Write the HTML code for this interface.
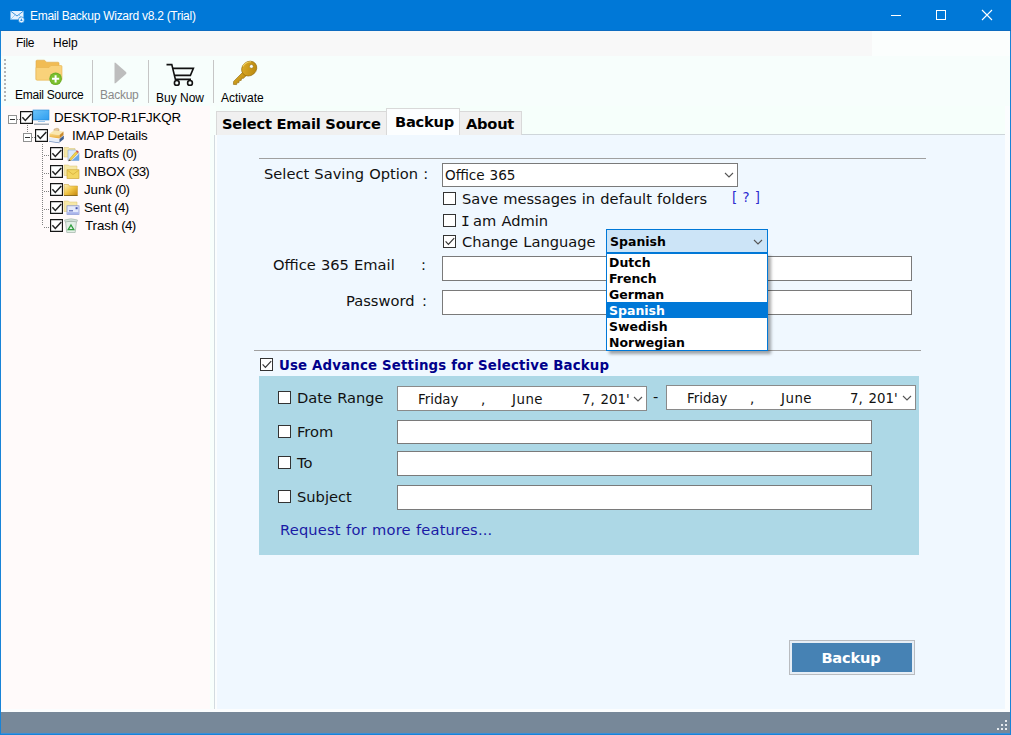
<!DOCTYPE html>
<html><head><meta charset="utf-8">
<style>
*{box-sizing:border-box;margin:0;padding:0}
html,body{width:1011px;height:735px;overflow:hidden;background:#f0f8ff}
body{position:relative;font-family:"DejaVu Sans","Liberation Sans",sans-serif;color:#000}
.abs,.abs-c>*{position:absolute}
#title{left:0;top:0;width:1011px;height:31px;background:#0078d7;border-bottom:1px solid #0d6cc0}
#title .t{left:30px;top:9px;font:12px "Liberation Sans",sans-serif;color:#fff;white-space:nowrap;letter-spacing:-0.27px}
#frame{left:0;top:31px;width:1011px;height:704px;border-left:1px solid #1883d7;border-right:1px solid #1883d7;border-bottom:1px solid #1883d7}
#menu{left:1px;top:31px;width:1009px;height:25px;background:linear-gradient(to right,#f8f8f8 871px,#fbfefd 871px)}
#menu span{position:absolute;top:5px;font:12px "Liberation Sans",sans-serif;letter-spacing:-0.3px}
#tool{left:1px;top:56px;width:1009px;height:50px;background:#f7fefc}
.tb{position:absolute;font:12px "Liberation Sans",sans-serif;white-space:nowrap;top:88px;letter-spacing:-0.25px}
.sep{position:absolute;top:60px;width:1px;height:43px;background:#c6c6c6}
#left{left:1px;top:106px;width:209px;height:606px;background:#fffafa}
#split{left:210px;top:106px;width:7px;height:606px;background:#f8fffc}
#split2{left:214px;top:135px;width:3px;height:577px;background:linear-gradient(to right,#d3dbe0 1px,#fbfdfe 1px)}
#status{left:1px;top:712px;width:1009px;height:22px;background:#778899}
.tree{position:absolute;font:13.33px "Liberation Sans",sans-serif;letter-spacing:-0.1px;white-space:nowrap;line-height:18px}
.cb{position:absolute;width:13px;height:13px;border:1px solid #333;background:#fff}
.cb svg{position:absolute;left:-1px;top:-1px}
#tree .cb{border-color:#151515;box-shadow:inset 0 0 0 .15px #1e1e1e}
.lbl{position:absolute;word-spacing:0.5px;font-size:14.67px;line-height:18px;white-space:nowrap;color:#111}
.inp{position:absolute;background:#fff;border:1px solid #7a7a7a}
.hr{position:absolute;height:1px;background:#a0a0a0}
.tab{position:absolute;font-weight:bold;font-size:14.67px;letter-spacing:-0.25px;white-space:nowrap;line-height:20px;color:#000}
.li{position:absolute;left:1px;width:160px;height:16px;font-weight:bold;font-size:12.5px;line-height:16px;padding-left:1px;white-space:nowrap}
.dt{position:absolute;font-size:13.33px;line-height:18px;white-space:nowrap;color:#111}
</style></head><body>
<div id="title" class="abs"><div class="t abs">Email Backup Wizard v8.2 (Trial)</div></div>
<div id="menu" class="abs"><span style="left:15px">File</span><span style="left:52px;letter-spacing:0">Help</span></div>
<div id="tool" class="abs"></div>
<div class="tb" style="left:15px;top:88px">Email Source</div>
<div class="tb" style="left:100px;top:88px;color:#8a8a8a">Backup</div>
<div class="tb" style="left:156px;top:91px;letter-spacing:0">Buy Now</div>
<div class="tb" style="left:221px;top:91px;letter-spacing:0">Activate</div>
<div class="sep" style="left:92px"></div><div class="sep" style="left:148px"></div><div class="sep" style="left:213px"></div>
<div id="left" class="abs"></div>
<div id="split" class="abs"></div><div id="split2" class="abs"></div>

<!-- TREE -->
<div id="tree">
<div class="tree" style="left:54px;top:109px">DESKTOP-R1FJKQR</div>
<div class="tree" style="left:72px;top:127px">IMAP Details</div>
<div class="tree" style="left:84px;top:145px;word-spacing:-.4px">Drafts <span style="letter-spacing:-.7px">(0)</span></div>
<div class="tree" style="left:84px;top:163px;word-spacing:-.4px">INBOX <span style="letter-spacing:-.7px">(33)</span></div>
<div class="tree" style="left:84px;top:181px;word-spacing:-.4px">Junk <span style="letter-spacing:-.7px">(0)</span></div>
<div class="tree" style="left:84px;top:199px;word-spacing:-.4px">Sent <span style="letter-spacing:-.7px">(4)</span></div>
<div class="tree" style="left:85px;top:217px;word-spacing:-.4px">Trash <span style="letter-spacing:-.7px">(4)</span></div>
<div class="cb on" style="left:20px;top:111px"><svg width="13" height="13" viewBox="0 0 13 13"><path d="M2.4 6.3 L5.3 9.4 L11.3 3" fill="none" stroke="#222" stroke-width="1.5"/></svg></div>
<div class="cb on" style="left:35px;top:129px"><svg width="13" height="13" viewBox="0 0 13 13"><path d="M2.4 6.3 L5.3 9.4 L11.3 3" fill="none" stroke="#222" stroke-width="1.5"/></svg></div>
<div class="cb on" style="left:50px;top:147px"><svg width="13" height="13" viewBox="0 0 13 13"><path d="M2.4 6.3 L5.3 9.4 L11.3 3" fill="none" stroke="#222" stroke-width="1.5"/></svg></div>
<div class="cb on" style="left:50px;top:165px"><svg width="13" height="13" viewBox="0 0 13 13"><path d="M2.4 6.3 L5.3 9.4 L11.3 3" fill="none" stroke="#222" stroke-width="1.5"/></svg></div>
<div class="cb on" style="left:50px;top:183px"><svg width="13" height="13" viewBox="0 0 13 13"><path d="M2.4 6.3 L5.3 9.4 L11.3 3" fill="none" stroke="#222" stroke-width="1.5"/></svg></div>
<div class="cb on" style="left:50px;top:201px"><svg width="13" height="13" viewBox="0 0 13 13"><path d="M2.4 6.3 L5.3 9.4 L11.3 3" fill="none" stroke="#222" stroke-width="1.5"/></svg></div>
<div class="cb on" style="left:50px;top:219px"><svg width="13" height="13" viewBox="0 0 13 13"><path d="M2.4 6.3 L5.3 9.4 L11.3 3" fill="none" stroke="#222" stroke-width="1.5"/></svg></div>

<!-- tree lines -->
<svg class="abs" style="left:0;top:106px" width="214" height="140" viewBox="0 106 214 140" shape-rendering="crispEdges">
<g stroke="#808080" stroke-width="1" stroke-dasharray="1 1" fill="none">
<path d="M17 119.5H20"/><path d="M27.5 125V133"/><path d="M32 137.5H35"/>
<path d="M42.5 144V226"/><path d="M44 155.5H50"/><path d="M44 173.5H50"/><path d="M44 191.5H50"/><path d="M44 209.5H50"/><path d="M44 227.5H50"/>
</g>
<g>
<rect x="8.5" y="115.5" width="8" height="8" fill="#fff" stroke="#919191"/><path d="M10 119.5H15" stroke="#333"/>
<rect x="23.5" y="133.5" width="8" height="8" fill="#fff" stroke="#919191"/><path d="M25 137.5H30" stroke="#333"/>
</g>
</svg>
<!-- computer -->
<svg class="abs" style="left:32px;top:109px" width="18" height="17" viewBox="0 0 18 17">
<defs><linearGradient id="gmon" x1="0" y1="0" x2="1" y2="1"><stop offset="0" stop-color="#6cc4f8"/><stop offset="1" stop-color="#2e9df0"/></linearGradient></defs>
<rect x="1" y="1" width="16" height="10" fill="url(#gmon)" stroke="#2a8ad8" stroke-width=".6"/>
<rect x="6" y="12" width="7" height="1" fill="#9cc8ee"/>
<rect x="2" y="14.6" width="15" height="1.2" fill="#8d9aa8"/>
</svg>
<!-- imap box -->
<svg class="abs" style="left:48px;top:127px" width="17" height="17" viewBox="0 0 17 17">
<defs><linearGradient id="gbx" x1="0" y1="0" x2="0" y2="1"><stop offset="0" stop-color="#f8dc8c"/><stop offset="1" stop-color="#e9a93a"/></linearGradient></defs>
<path d="M6 2.2 L9 1.2 L11 2 L11 4 L6 4.5Z" fill="#e7c89a" stroke="#b99868" stroke-width=".5"/>
<path d="M1.5 6.5 L6 3.5 L15.5 4.5 L11.5 8Z" fill="#f9e7b0"/>
<path d="M1.5 6.5 L11.5 8 L11.5 11.5 L1.5 10Z" fill="url(#gbx)"/>
<path d="M11.5 8 L15.5 4.5 L15.5 8 L11.5 11.5Z" fill="#c98a2c"/>
<path d="M1 10.5 L11.5 12 L11.5 15.5 L1 14Z" fill="#e8eef8"/>
<path d="M11.5 12 L15.8 8.5 L15.8 12 L11.5 15.5Z" fill="#3f5f8f"/>
<path d="M1 14 L11.5 15.5 L11.5 16.2 L1 14.8Z" fill="#6f8fc0"/>
</svg>
<!-- drafts -->
<svg class="abs" style="left:63px;top:145px" width="17" height="17" viewBox="0 0 17 17">
<path d="M1 2.5 H5.5 L6.5 3.5 H12 V12 H1Z" fill="#f6e7a6" stroke="#d9c070" stroke-width=".5"/>
<path d="M5 5 H13 L16 8 V15.5 H5Z" fill="#dbe9fa" stroke="#8fa8cc" stroke-width=".6"/>
<path d="M9 15.5 L16 9 V15.5Z" fill="#6aa6e6"/>
<path d="M6 14.5 L13 6.5 L14.8 8 L7.8 15.6Z" fill="#f3d24a" stroke="#a88420" stroke-width=".4"/>
<path d="M13 6.5 L14 5.3 L15.8 6.8 L14.8 8Z" fill="#d05050"/>
<path d="M6 14.5 L5.4 16.2 L7.8 15.6Z" fill="#4a3a2a"/>
</svg>
<!-- inbox -->
<svg class="abs" style="left:63px;top:163px" width="17" height="17" viewBox="0 0 17 17">
<path d="M1 2 H5.5 L6.5 3 H14 V12.5 H1Z" fill="#f6e8a8" stroke="#d8c270" stroke-width=".5"/>
<rect x="4" y="6.8" width="12" height="8.8" fill="#f3d661" stroke="#c9a030" stroke-width=".6"/>
<path d="M4.3 7.2 L10 11.5 L15.7 7.2" fill="none" stroke="#d7ad3a" stroke-width=".8"/>
</svg>
<!-- junk -->
<svg class="abs" style="left:63px;top:181px" width="17" height="17" viewBox="0 0 17 17">
<defs><linearGradient id="gjk" x1="0" y1="0" x2="1" y2="1"><stop offset="0" stop-color="#fdf3c0"/><stop offset=".5" stop-color="#f1c444"/><stop offset="1" stop-color="#c4850e"/></linearGradient></defs>
<path d="M1 3.5 H5.5 L6.5 5 H14.5 V14.5 H1Z" fill="url(#gjk)" stroke="#c79a30" stroke-width=".5"/>
<rect x="1" y="14" width="13.5" height=".8" fill="#7a5a10"/>
</svg>
<!-- sent -->
<svg class="abs" style="left:63px;top:199px" width="17" height="17" viewBox="0 0 17 17">
<path d="M1 2 H5.5 L6.5 3 H14 V12.5 H1Z" fill="#f6e8a8" stroke="#d8c270" stroke-width=".5"/>
<rect x="4" y="6.8" width="12" height="8.6" fill="#e4e9fb" stroke="#7d8ccf" stroke-width=".7"/>
<rect x="4.3" y="13.2" width="11.4" height="2" fill="#a9b4ea"/>
<rect x="6" y="11.2" width="4" height="1.2" fill="#5d6ab8"/>
<rect x="12.6" y="8.2" width="2" height="2" fill="#4656b0"/>
</svg>
<!-- trash -->
<svg class="abs" style="left:63px;top:217px" width="17" height="17" viewBox="0 0 17 17">
<path d="M2.5 4.5 H13.5 L12.2 15.5 H3.8Z" fill="#e3efe6" stroke="#9fb3a6" stroke-width=".7"/>
<path d="M1.5 3 Q8 .5 14.5 3 L13.8 5 Q8 3.2 2.2 5Z" fill="#d5e3da" stroke="#9fb3a6" stroke-width=".6"/>
<path d="M8 8 L10.8 12.6 H5.2Z" fill="none" stroke="#2e9c3c" stroke-width="1.3"/>
</svg>
</div>

<!-- TABS -->
<div id="tabs">
<div class="abs" style="left:216px;top:106px;width:790px;height:29px;background:#f6fffb;border-bottom:1px solid #cfd6da"></div>
<div class="abs" style="left:216px;top:111px;width:171px;height:24px;background:#f0f0f0;border:1px solid #d9d9d9;border-bottom:none"></div>
<div class="abs" style="left:459px;top:111px;width:63px;height:24px;background:#f0f0f0;border:1px solid #d9d9d9;border-bottom:none"></div>
<div class="abs" style="left:386px;top:108px;width:74px;height:27px;background:#fcfeff;border:1px solid #d9d9d9;border-bottom:none"></div>
<div class="tab" style="left:222px;top:114px">Select Email Source</div>
<div class="tab" style="left:395px;top:112px">Backup</div>
<div class="tab" style="left:466px;top:114px">About</div>
</div>


<!-- FORM -->
<div class="hr" style="left:259px;top:158px;width:667px"></div>
<div class="lbl" style="left:264px;top:165px">Select Saving Option :</div>
<div class="inp" style="left:442px;top:163px;width:296px;height:24px"></div>
<div class="lbl" style="left:445px;top:166px;font-size:13.6px">Office 365</div>
<div class="cb" style="left:443px;top:192px;background:#fff"></div>
<div class="lbl" style="left:462px;top:190px">Save messages in default folders</div>
<div class="lbl" style="left:732px;top:189px;color:#2b2bd0;font-size:13.33px;word-spacing:1px">[ ? ]</div>
<div class="cb" style="left:443px;top:214px"></div>
<div class="lbl" style="left:462px;top:212px"><span style="font-family:'DejaVu Sans Mono',monospace;letter-spacing:-2px;margin-left:-1px">I</span> am Admin</div>
<div class="cb on" style="left:443px;top:235px"><svg width="13" height="13" viewBox="0 0 13 13"><path d="M2.6 6.4 L5.4 9.3 L11.2 3.2" fill="none" stroke="#333" stroke-width="1.2"/></svg></div>
<div class="lbl" style="left:462px;top:233px">Change Language</div>
<div class="lbl" style="left:273px;top:256px">Office 365 Email</div>
<div class="lbl" style="left:421px;top:256px">:</div>
<div class="inp" style="left:442px;top:256px;width:470px;height:25px"></div>
<div class="lbl" style="left:346px;top:292px">Password</div><div class="lbl" style="left:422px;top:292px">:</div>
<div class="inp" style="left:442px;top:290px;width:470px;height:25px"></div>
<div class="hr" style="left:254px;top:350px;width:667px"></div>

<!-- LANGUAGE COMBO -->
<div class="abs" style="left:606px;top:229px;width:162px;height:24px;background:#cce4f7;border:1px solid #0078d7"></div>
<div class="abs" style="left:610px;top:234px;font-weight:bold;font-size:12.5px;line-height:16px">Spanish</div>
<div class="abs" style="left:606px;top:253px;width:162px;height:98px;background:#fff;border:1px solid #0078d7;box-shadow:3px 3px 3px rgba(0,0,0,.35)">
<div class="li" style="top:1px">Dutch</div>
<div class="li" style="top:17px">French</div>
<div class="li" style="top:33px">German</div>
<div class="abs" style="left:0;top:48px;width:160px;height:16px;background:#0078d7"></div><div class="li" style="top:49px;color:#fff">Spanish</div>
<div class="li" style="top:65px">Swedish</div>
<div class="li" style="top:81px">Norwegian</div>
</div>


<!-- ADVANCED -->
<div class="cb on" style="left:260px;top:358px"><svg width="13" height="13" viewBox="0 0 13 13"><path d="M2.6 6.4 L5.4 9.3 L11.2 3.2" fill="none" stroke="#333" stroke-width="1.2"/></svg></div>
<div class="abs" style="left:279px;top:357px;font-weight:bold;font-size:13.33px;letter-spacing:0.17px;line-height:18px;color:#00008b;white-space:nowrap">Use Advance Settings for Selective Backup</div>
<div class="abs" style="left:259px;top:376px;width:660px;height:179px;background:#add8e6"></div>
<div class="cb" style="left:278px;top:391px"></div>
<div class="lbl" style="left:297px;top:389px">Date Range</div>
<div class="inp" style="left:397px;top:386px;width:250px;height:25px;border-color:#8a8a8a"></div>
<div class="lbl" style="left:653px;top:388px">-</div>
<div class="inp" style="left:666px;top:385px;width:250px;height:25px;border-color:#8a8a8a"></div>
<div class="dt" style="left:418px;top:391px">Friday</div><div class="dt" style="left:481px;top:391px">,</div><div class="dt" style="left:512px;top:391px;letter-spacing:.5px">June</div><div class="dt" style="left:582px;top:391px;word-spacing:1.5px">7, 201'</div>
<div class="dt" style="left:687px;top:390px">Friday</div><div class="dt" style="left:750px;top:390px">,</div><div class="dt" style="left:781px;top:390px;letter-spacing:.5px">June</div><div class="dt" style="left:850px;top:390px;word-spacing:1.5px">7, 201'</div>
<div class="cb" style="left:278px;top:425px"></div>
<div class="lbl" style="left:297px;top:423px">From</div>
<div class="inp" style="left:397px;top:420px;width:475px;height:24px"></div>
<div class="cb" style="left:278px;top:456px"></div>
<div class="lbl" style="left:297px;top:454px">To</div>
<div class="inp" style="left:397px;top:451px;width:475px;height:25px"></div>
<div class="cb" style="left:278px;top:490px"></div>
<div class="lbl" style="left:297px;top:488px">Subject</div>
<div class="inp" style="left:397px;top:485px;width:475px;height:25px"></div>
<div class="lbl" style="left:280px;top:521px;color:#1a1aa5;letter-spacing:0.17px">Request for more features...</div>

<!-- CHEVRONS -->
<svg class="abs" style="left:724px;top:172px" width="10" height="6" viewBox="0 0 10 6"><path d="M1 1 L5 5 L9 1" fill="none" stroke="#555" stroke-width="1.1"/></svg><svg class="abs" style="left:633px;top:396px" width="10" height="6" viewBox="0 0 10 6"><path d="M1 1 L5 5 L9 1" fill="none" stroke="#555" stroke-width="1.1"/></svg><svg class="abs" style="left:902px;top:395px" width="10" height="6" viewBox="0 0 10 6"><path d="M1 1 L5 5 L9 1" fill="none" stroke="#555" stroke-width="1.1"/></svg><svg class="abs" style="left:753px;top:238.5px" width="10" height="6" viewBox="0 0 10 6"><path d="M1 1 L5 5 L9 1" fill="none" stroke="#555" stroke-width="1.1"/></svg>

<!-- BUTTON -->
<div class="abs" style="left:789px;top:640px;width:126px;height:35px;border:1px solid #b9bcc0;background:#e6eef6"></div>
<div class="abs" style="left:792px;top:643px;width:120px;height:29px;background:#4682b4"></div>
<div class="abs" style="left:791px;top:648px;width:120px;text-align:center;font-weight:bold;font-size:14.67px;letter-spacing:-.2px;line-height:20px;color:#fff">Backup</div>

<div class="abs" style="left:1px;top:709px;width:1009px;height:3px;background:#fbfdfe"></div>
<div class="abs" style="left:1005px;top:106px;width:5px;height:606px;background:#fbfdfe"></div>
<div id="status" class="abs"></div>
<div class="abs" style="left:1px;top:733px;width:1009px;height:1px;background:#3c8ed8"></div><div id="frame" class="abs"></div>
<!-- TITLE ICON + CONTROLS -->
<svg class="abs" style="left:9px;top:9px" width="18" height="15" viewBox="0 0 18 15">
<rect x="1.5" y="2" width="13" height="8.5" fill="#e6f3ff"/>
<path d="M1.5 2 L8 7 L14.5 2" fill="none" stroke="#3b93dd" stroke-width="1"/>
<path d="M1.5 10.5 L6 6 M14.5 10.5 L10 6" stroke="#8cc1ee" stroke-width=".8"/>
<circle cx="12.4" cy="10.9" r="3" fill="#e6f3ff" stroke="#0078d7" stroke-width=".6"/>
<path d="M12.4 9.3 L13.6 12 H11.2Z" fill="#2a8be0"/>
</svg>
<svg class="abs" style="left:880px;top:0" width="131" height="31" viewBox="0 0 131 31">
<path d="M11 15.5 H21" stroke="#fff" stroke-width="1"/>
<rect x="56.5" y="10.5" width="9" height="9" fill="none" stroke="#fff" stroke-width="1"/>
<path d="M102 10 L112 20 M112 10 L102 20" stroke="#fff" stroke-width="1.1"/>
</svg>
<!-- TOOLBAR ICONS -->
<svg class="abs" style="left:4px;top:58px" width="3" height="44" viewBox="0 0 3 44"><g fill="#b4b4b4"><rect x="0" y="1" width="2" height="2"/><rect x="0" y="5" width="2" height="2"/><rect x="0" y="9" width="2" height="2"/><rect x="0" y="13" width="2" height="2"/><rect x="0" y="17" width="2" height="2"/><rect x="0" y="21" width="2" height="2"/><rect x="0" y="25" width="2" height="2"/><rect x="0" y="29" width="2" height="2"/><rect x="0" y="33" width="2" height="2"/><rect x="0" y="37" width="2" height="2"/><rect x="0" y="41" width="2" height="2"/></g></svg>
<svg class="abs" style="left:34px;top:58px" width="30" height="29" viewBox="0 0 30 29">
<path d="M2 3.2 Q2 2.2 3 2.2 H10.5 L12.5 4.2 H24 Q25 4.2 25 5.2 V21.5 H2Z" fill="#f1bc54" stroke="#e0a843" stroke-width=".6"/>
<path d="M2 9.5 H15 L17 7.5 H27 Q28 7.5 28 8.5 V21.2 Q28 22.2 27 22.2 H3 Q2 22.2 2 21.2Z" fill="#f9d27a" stroke="#e8b34e" stroke-width=".6"/>
<circle cx="21.6" cy="20.8" r="6.3" fill="#6cae25"/>
<circle cx="21.6" cy="20.8" r="5.4" fill="#7cc02f"/>
<path d="M21.6 17.2 V24.4 M18 20.8 H25.2" stroke="#fff" stroke-width="2"/>
</svg>
<svg class="abs" style="left:113px;top:61px" width="15" height="24" viewBox="0 0 15 24">
<path d="M1.5 2.5 Q1.5 1 2.8 2 L13 11 Q14 12 13 13 L2.8 22 Q1.5 23 1.5 21.5Z" fill="#bdbdbd"/>
</svg>
<svg class="abs" style="left:164px;top:62px" width="32" height="26" viewBox="0 0 32 26">
<g fill="none" stroke="#111" stroke-width="1.6" stroke-linejoin="miter">
<path d="M2.5 2.6 H7.8 L11.4 17.4 H27"/>
<path d="M9 6.4 H29.4 L26.4 13.4 H11"/>
<circle cx="12.8" cy="20.9" r="2.4"/><circle cx="26" cy="20.9" r="2.4"/>
</g></svg>
<svg class="abs" style="left:231px;top:59px" width="28" height="28" viewBox="0 0 28 28">
<defs><linearGradient id="gkey" x1="0" y1="0" x2="1" y2="1"><stop offset="0" stop-color="#e0b02c"/><stop offset="1" stop-color="#b5830a"/></linearGradient></defs>
<path d="M12.4 12.6 L2.6 22.4 L2.4 25.4 L5.6 25.6 L6 23.8 L8 23.6 L8.2 21.6 L10.2 21.4 L10.6 19.4 L12.6 19.2 L16 15.8Z" fill="url(#gkey)" stroke="#8f6606" stroke-width=".6"/>
<ellipse cx="18.2" cy="9.6" rx="8" ry="7" transform="rotate(-40 18.2 9.6)" fill="url(#gkey)" stroke="#8f6606" stroke-width=".6"/>
<circle cx="20.4" cy="7.4" r="1.9" fill="#f9fefe" stroke="#8f6606" stroke-width=".5"/>
<path d="M11.8 7.5 Q14.5 3 20 2.8" fill="none" stroke="#f0d266" stroke-width="1.1"/>
</svg>
<!-- GRIP -->
<svg class="abs" style="left:996px;top:719px" width="14" height="14" viewBox="0 0 14 14"><g fill="#e6eaee"><rect x="9" y="1" width="2" height="2"/><rect x="5" y="5" width="2" height="2"/><rect x="9" y="5" width="2" height="2"/><rect x="1" y="9" width="2" height="2"/><rect x="5" y="9" width="2" height="2"/><rect x="9" y="9" width="2" height="2"/></g></svg>

</body></html>
